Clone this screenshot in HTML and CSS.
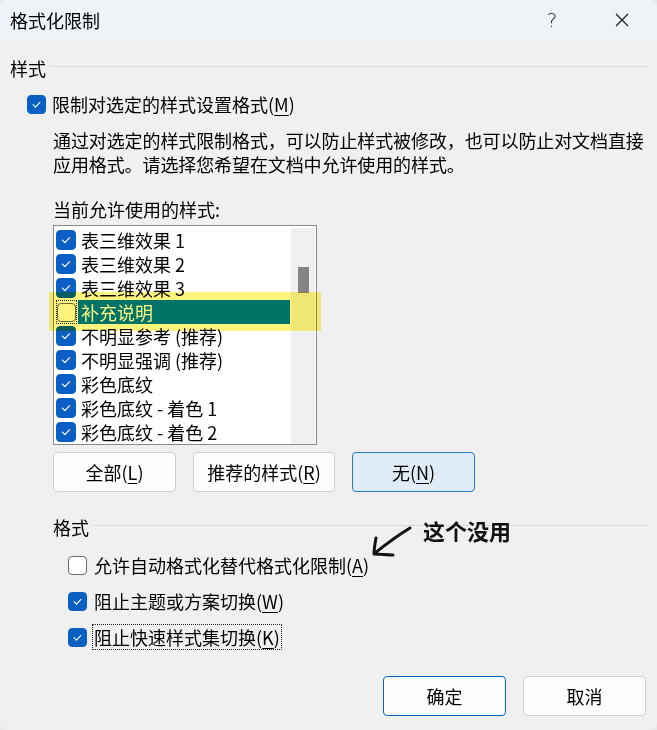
FILE: index.html
```html
<!DOCTYPE html>
<html lang="zh-CN">
<head>
<meta charset="UTF-8">
<title>格式化限制</title>
<link rel="stylesheet" href="styles.css">
</head>
<body>
<div class="dialog">

  <div class="titlebar">
    <span class="title">格式化限制</span>
    <span class="tb-btn help">?</span>
    <span class="tb-btn close">
      <svg width="14" height="14" viewBox="0 0 14 14"><path d="M1 1 L13 13 M13 1 L1 13" stroke="#1a1a1a" stroke-width="1.2" fill="none"/></svg>
    </span>
  </div>

  <div class="content">
    <div class="group-head"><span>样式</span><i class="rule"></i></div>

    <div class="check-row main-check">
      <span class="cb on"><svg viewBox="0 0 20 20"><path d="M6 10.2 L8.8 13 L14 7.4"/></svg></span>
      <span class="lbl">限制对选定的样式设置格式(<u>M</u>)</span>
    </div>

    <div class="indent">
      <p class="desc">通过对选定的样式限制格式，可以防止样式被修改，也可以防止对文档直接应用格式。请选择您希望在文档中允许使用的样式。</p>
      <div class="list-label">当前允许使用的样式:</div>

      <div class="listbox">
        <div class="items">
          <div class="row"><span class="cell"><span class="cb on"><svg viewBox="0 0 20 20"><path d="M6 10.2 L8.8 13 L14 7.4"/></svg></span></span><span class="name">表三维效果 1</span></div>
          <div class="row"><span class="cell"><span class="cb on"><svg viewBox="0 0 20 20"><path d="M6 10.2 L8.8 13 L14 7.4"/></svg></span></span><span class="name">表三维效果 2</span></div>
          <div class="row"><span class="cell"><span class="cb on"><svg viewBox="0 0 20 20"><path d="M6 10.2 L8.8 13 L14 7.4"/></svg></span></span><span class="name">表三维效果 3</span></div>
          <div class="row selected"><span class="cell focus"><span class="cb"></span></span><span class="name">补充说明</span></div>
          <div class="row"><span class="cell"><span class="cb on"><svg viewBox="0 0 20 20"><path d="M6 10.2 L8.8 13 L14 7.4"/></svg></span></span><span class="name">不明显参考 (推荐)</span></div>
          <div class="row"><span class="cell"><span class="cb on"><svg viewBox="0 0 20 20"><path d="M6 10.2 L8.8 13 L14 7.4"/></svg></span></span><span class="name">不明显强调 (推荐)</span></div>
          <div class="row"><span class="cell"><span class="cb on"><svg viewBox="0 0 20 20"><path d="M6 10.2 L8.8 13 L14 7.4"/></svg></span></span><span class="name">彩色底纹</span></div>
          <div class="row"><span class="cell"><span class="cb on"><svg viewBox="0 0 20 20"><path d="M6 10.2 L8.8 13 L14 7.4"/></svg></span></span><span class="name">彩色底纹 - 着色 1</span></div>
          <div class="row"><span class="cell"><span class="cb on"><svg viewBox="0 0 20 20"><path d="M6 10.2 L8.8 13 L14 7.4"/></svg></span></span><span class="name">彩色底纹 - 着色 2</span></div>
        </div>
        <div class="scrollbar"><div class="thumb"></div></div>
        <div class="marker"></div>
      </div>

      <div class="btn-row">
        <button class="btn">全部(<u>L</u>)</button>
        <button class="btn wide">推荐的样式(<u>R</u>)</button>
        <button class="btn active">无(<u>N</u>)</button>
      </div>

      <div class="group-head fmt-head"><span>格式</span><i class="rule"></i></div>

      <div class="opts">
        <div class="check-row opt">
          <span class="cb"></span>
          <span class="lbl">允许自动格式化替代格式化限制(<u>A</u>)</span>
        </div>
        <div class="check-row opt">
          <span class="cb on"><svg viewBox="0 0 20 20"><path d="M6 10.2 L8.8 13 L14 7.4"/></svg></span>
          <span class="lbl">阻止主题或方案切换(<u>W</u>)</span>
        </div>
        <div class="check-row opt">
          <span class="cb on"><svg viewBox="0 0 20 20"><path d="M6 10.2 L8.8 13 L14 7.4"/></svg></span>
          <span class="lbl focus">阻止快速样式集切换(<u>K</u>)</span>
        </div>
      </div>
    </div>

    <div class="footer">
      <button class="btn primary">确定</button>
      <button class="btn">取消</button>
    </div>
  </div>

  <!-- hand-drawn note -->
  <svg class="note-arrow" width="50" height="36" viewBox="0 0 50 36">
    <path d="M42 3 C32 9 22 16 7 28 M8 13 C7 19 6 24 6 29 C12 29 19 30 25 30" stroke="#111" stroke-width="3" fill="none" stroke-linecap="round" stroke-linejoin="round"/>
  </svg>
  <span class="note">这个没用</span>
</div>
</body>
</html>
```

FILE: styles.css
```css
:root {
  --bg: #f0f0f0;
  --title-bg: #eef3f8;
  --accent: #0a60c2;
  --rule: #d9d9d9;
  --btn-line: #d0d0d0;
}
* { box-sizing: border-box; }
html, body {
  margin: 0;
  padding: 0;
  background: #e9e9e9;
  font-family: "Noto Sans CJK SC", "Microsoft YaHei", sans-serif;
  font-size: 18px;
  color: #000;
}
u { text-underline-offset: 3px; text-decoration-thickness: 1px; }

.dialog {
  position: relative;
  width: 657px;
  height: 730px;
  background: var(--bg);
  border-radius: 8px;
  overflow: hidden;
}

.titlebar {
  height: 42px;
  background: var(--title-bg);
  display: flex;
  align-items: center;
  padding: 0 0 2px 10px;
}
.title { flex: 1; line-height: 24px; }
.tb-btn {
  width: 70px;
  height: 40px;
  display: flex;
  align-items: center;
  justify-content: center;
}
.help {
  font-family: "DejaVu Sans", sans-serif;
  font-weight: 200;
  font-size: 20px;
  color: #222;
}

.content { padding: 14px 10px 0 10px; }

.group-head {
  display: flex;
  align-items: center;
  gap: 4px;
  line-height: 24px;
}
.group-head .rule {
  flex: 1;
  height: 1px;
  background: var(--rule);
  margin-top: -3px;
}

.check-row {
  display: flex;
  align-items: center;
  line-height: 24px;
}
.main-check {
  margin-top: 12px;
  padding-left: 17px;
  gap: 6px;
}

.cb {
  width: 19px;
  height: 19px;
  border-radius: 4px;
  border: 1px solid #6b6b6b;
  background: #fff;
  flex: 0 0 auto;
  display: flex;
}
.cb.on {
  background: var(--accent);
  border-color: var(--accent);
}
.cb svg { width: 100%; height: 100%; }
.cb svg path {
  stroke: #fff;
  stroke-width: 1.3;
  fill: none;
  stroke-linecap: round;
  stroke-linejoin: round;
}

.indent { padding-left: 43px; }
.desc {
  margin: 12px 0 0;
  line-height: 24px;
  letter-spacing: -0.1px;
}
.list-label { margin-top: 21px; line-height: 24px; }

.listbox {
  position: relative;
  margin-top: 4px;
  width: 264px;
  height: 220px;
  border: 1px solid #8a8a8a;
  background: #fff;
  padding: 2px 1px 0 2px;
  display: flex;
}
.items {
  flex: 1;
  min-width: 0;
  margin-right: 1px;
  height: 216px;
  overflow: hidden;
}
.row {
  display: flex;
  align-items: center;
  height: 24px;
  line-height: 24px;
  white-space: nowrap;
}
.cell {
  width: 21px;
  height: 24px;
  display: flex;
  align-items: center;
}
.cell .cb { width: 20px; height: 20px; }
.cell.focus { outline: 1px dotted #222; outline-offset: -1px; }
.cell.focus .cb { margin-left: 1px; width: 19px; height: 19px; }
.name { flex: 1; padding-left: 3px; margin-left: 1px; }
.row.selected .name { background: #0078d4; color: #fff; }

.scrollbar {
  width: 24px;
  background: #f0f0f0;
  height: 216px;
  padding-top: 39px;
  display: flex;
  justify-content: center;
}
.thumb {
  width: 11px;
  height: 26px;
  background: #858585;
}

/* highlighter mark over the selected row */
.marker {
  position: absolute;
  left: -5px;
  top: 66px;
  width: 272px;
  height: 39px;
  background: rgb(255, 245, 125);
  mix-blend-mode: multiply;
}

.btn-row {
  display: flex;
  gap: 17px;
  margin-top: 7px;
}
.btn {
  font-family: inherit;
  font-size: 18px;
  color: #000;
  width: 123px;
  height: 40px;
  background: #fdfdfd;
  border: 1px solid var(--btn-line);
  border-radius: 4px;
  padding: 0;
  line-height: 24px;
}
.btn.wide { width: 142px; }
.btn.active {
  background: #e0edf9;
  border-color: #2a79c9;
}
.btn.primary { border-color: #0067c0; }

.fmt-head { margin-top: 23px; }

.opts {
  margin-top: 13px;
  padding-left: 15px;
  display: flex;
  flex-direction: column;
  gap: 10px;
}
.opt { gap: 5px; }
.opt .lbl {
  border: 1px dotted transparent;
  padding: 0 1px;
  line-height: 24px;
}
.opt .lbl.focus { border-color: #222; }

.footer {
  display: flex;
  justify-content: flex-end;
  gap: 17px;
  margin-top: 26px;
  padding-right: 1px;
}

.note-arrow {
  position: absolute;
  left: 368px;
  top: 525px;
}
.note {
  position: absolute;
  left: 423px;
  top: 515px;
  font-size: 22px;
  font-weight: 700;
  line-height: 30px;
  color: #111;
}
```
